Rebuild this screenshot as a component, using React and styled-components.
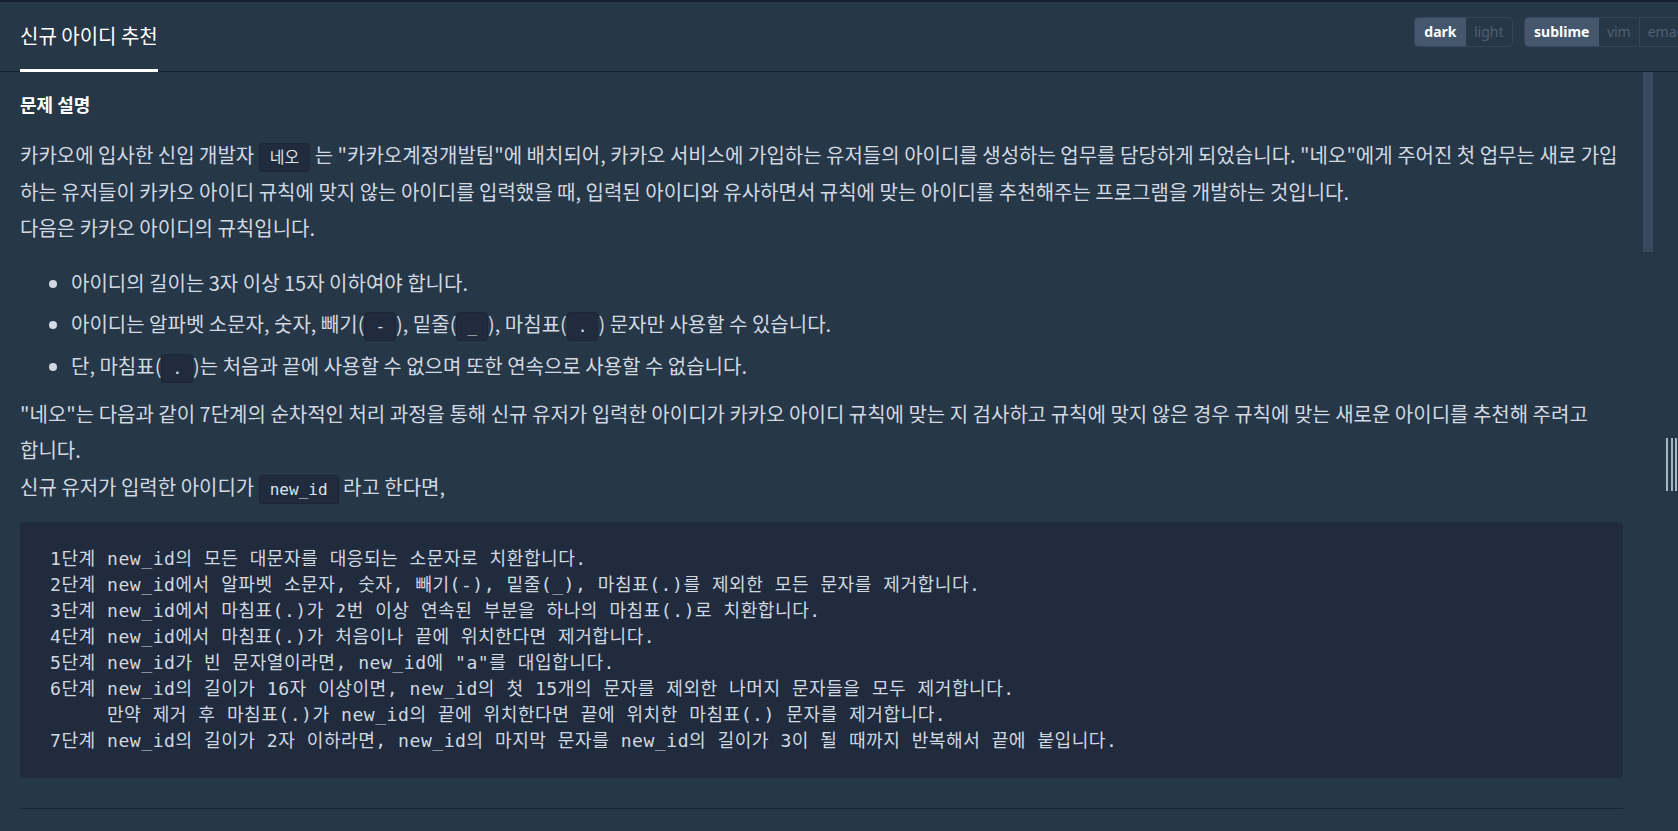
import React from "react";
import styled, { createGlobalStyle } from "styled-components";

const GlobalStyle = createGlobalStyle`
  html, body {
    margin: 0;
    padding: 0;
    background: #263747;
    overflow: hidden;
  }
  * {
    box-sizing: border-box;
  }
`;

const Page = styled.div`
  width: 100vw;
  height: 100vh;
  display: flex;
  flex-direction: column;
  border-top: 2px solid #172030;
  overflow: hidden;
  font-family: "Noto Sans CJK KR", "Noto Sans", sans-serif;
`;

const Header = styled.header`
  flex: none;
  height: 70px;
  display: flex;
  align-items: stretch;
  border-bottom: 1px solid #172030;
  margin-right: -40px;
`;

const Tab = styled.div`
  margin-left: 20px;
  margin-bottom: -1px;
  display: flex;
  align-items: center;
  font-size: 20px;
  color: #ffffff;
  border-bottom: 3px solid #ffffff;
  white-space: nowrap;
`;

const Spacer = styled.div`
  flex: 1;
`;

const Switches = styled.div`
  align-self: flex-start;
  margin-top: 15px;
  display: flex;
  gap: 11px;
  padding-right: 19px;
`;

const Group = styled.div`
  display: flex;
  height: 30px;
  border: 1px solid #34455a;
  border-radius: 4px;
  overflow: hidden;
`;

const Option = styled.div`
  padding: 0 ${(p) => (p.active ? "9.5px" : "8px")};
  font-family: "Noto Sans", sans-serif;
  font-size: 14px;
  line-height: 28px;
  font-weight: ${(p) => (p.active ? 700 : 400)};
  color: ${(p) => (p.active ? "#ffffff" : "#516074")};
  background: ${(p) => (p.active ? "#44576c" : "transparent")};
  border-left: ${(p) => (p.divider ? "1px solid #34455a" : "none")};
`;

const Main = styled.div`
  flex: 1;
  min-height: 0;
  display: flex;
`;

const Content = styled.div`
  flex: 1;
  min-width: 0;
  padding: 20px 20px 0 20px;
  overflow: hidden;
  color: #d2d9e2;
  font-size: 20px;
  line-height: 36.5px;
`;

const ScrollTrack = styled.div`
  flex: none;
  width: 10px;
`;

const ScrollThumb = styled.div`
  height: 180px;
  background: #3a495d;
`;

const Gutter = styled.div`
  flex: none;
  width: 25px;
  padding: 366px 0 0 13px;
`;

const Grip = styled.div`
  display: flex;
  gap: 2.5px;
  height: 53px;
`;

const GripBar = styled.div`
  width: 2px;
  background: #a7b5c2;
`;

const Heading = styled.h5`
  margin: 0 0 20px;
  font-size: 18px;
  line-height: 25px;
  font-weight: 700;
  color: #ffffff;
`;

const Para = styled.p`
  margin: 0;
  word-break: ${(p) => (p.keepWords ? "keep-all" : "normal")};
`;

const Rules = styled.ul`
  margin: 18px 0 11.5px;
  padding-left: 51px;
`;

const Rule = styled.li`
  & + & {
    margin-top: 5.2px;
  }
`;

const Code = styled.code`
  font-family: "DejaVu Sans Mono", "Noto Sans CJK KR", monospace;
  font-size: 16px;
  line-height: 1;
  padding: 4px 10px;
  color: #dde4ec;
  background: #202b3d;
  border: 1px solid #1c2636;
  border-radius: 4px;
`;

const Pre = styled.pre`
  margin: 17px 0 0;
  padding: 24px 30px;
  background: #202b3d;
  border-radius: 4px;
  font-family: "DejaVu Sans Mono", "Noto Sans CJK KR", monospace;
  font-size: 18.1px;
  letter-spacing: 0.5px;
  line-height: 26px;
  color: #d0d8e1;
  white-space: pre;
  overflow: hidden;
`;

const Divider = styled.hr`
  margin: 30px 0 0;
  border: none;
  border-top: 1px solid #1a2433;
`;

const steps = [
  "1단계 new_id의 모든 대문자를 대응되는 소문자로 치환합니다.",
  "2단계 new_id에서 알파벳 소문자, 숫자, 빼기(-), 밑줄(_), 마침표(.)를 제외한 모든 문자를 제거합니다.",
  "3단계 new_id에서 마침표(.)가 2번 이상 연속된 부분을 하나의 마침표(.)로 치환합니다.",
  "4단계 new_id에서 마침표(.)가 처음이나 끝에 위치한다면 제거합니다.",
  '5단계 new_id가 빈 문자열이라면, new_id에 "a"를 대입합니다.',
  "6단계 new_id의 길이가 16자 이상이면, new_id의 첫 15개의 문자를 제외한 나머지 문자들을 모두 제거합니다.",
  "     만약 제거 후 마침표(.)가 new_id의 끝에 위치한다면 끝에 위치한 마침표(.) 문자를 제거합니다.",
  "7단계 new_id의 길이가 2자 이하라면, new_id의 마지막 문자를 new_id의 길이가 3이 될 때까지 반복해서 끝에 붙입니다.",
];

export default function App() {
  return (
    <>
      <GlobalStyle />
      <Page>
        <Header>
          <Tab>신규 아이디 추천</Tab>
          <Spacer />
          <Switches>
            <Group>
              <Option active>dark</Option>
              <Option>light</Option>
            </Group>
            <Group>
              <Option active>sublime</Option>
              <Option>vim</Option>
              <Option divider>emacs</Option>
            </Group>
          </Switches>
        </Header>
        <Main>
          <Content>
            <Heading>문제 설명</Heading>
            <Para>
              카카오에 입사한 신입 개발자 <Code>네오</Code> 는 "카카오계정개발팀"에 배치되어, 카카오 서비스에 가입하는
              유저들의 아이디를 생성하는 업무를 담당하게 되었습니다. "네오"에게 주어진 첫 업무는 새로 가입하는 유저들이
              카카오 아이디 규칙에 맞지 않는 아이디를 입력했을 때, 입력된 아이디와 유사하면서 규칙에 맞는 아이디를
              추천해주는 프로그램을 개발하는 것입니다.
              <br />
              다음은 카카오 아이디의 규칙입니다.
            </Para>
            <Rules>
              <Rule>아이디의 길이는 3자 이상 15자 이하여야 합니다.</Rule>
              <Rule>
                아이디는 알파벳 소문자, 숫자, 빼기(<Code>-</Code>), 밑줄(<Code>_</Code>), 마침표(<Code>.</Code>) 문자만
                사용할 수 있습니다.
              </Rule>
              <Rule>
                단, 마침표(<Code>.</Code>)는 처음과 끝에 사용할 수 없으며 또한 연속으로 사용할 수 없습니다.
              </Rule>
            </Rules>
            <Para keepWords>
              "네오"는 다음과 같이 7단계의 순차적인 처리 과정을 통해 신규 유저가 입력한 아이디가 카카오 아이디 규칙에 맞는
              지 검사하고 규칙에 맞지 않은 경우 규칙에 맞는 새로운 아이디를 추천해 주려고 합니다.
              <br />
              신규 유저가 입력한 아이디가 <Code>new_id</Code> 라고 한다면,
            </Para>
            <Pre>{steps.join("\n")}</Pre>
            <Divider />
          </Content>
          <ScrollTrack>
            <ScrollThumb />
          </ScrollTrack>
          <Gutter>
            <Grip>
              <GripBar />
              <GripBar />
              <GripBar />
            </Grip>
          </Gutter>
        </Main>
      </Page>
    </>
  );
}
